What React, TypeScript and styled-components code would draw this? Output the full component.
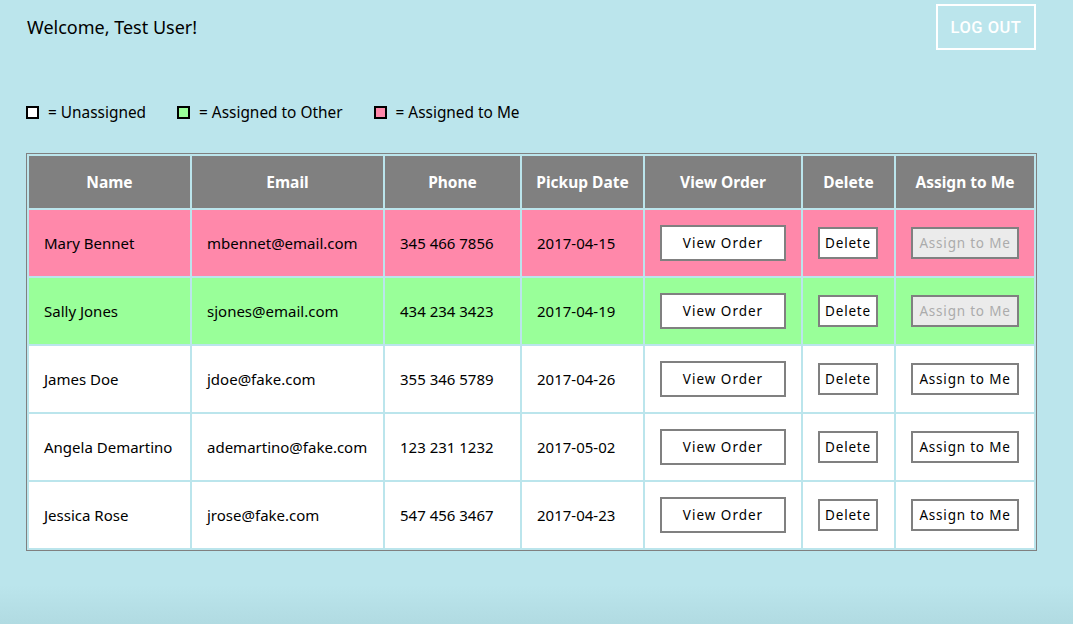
import React from "react";
import styled, { createGlobalStyle } from "styled-components";

const Global = createGlobalStyle`
  html, body {
    margin: 0;
    padding: 0;
  }
  body {
    min-height: 624px;
    background: linear-gradient(to bottom, #bbe5ec 0px, #bbe5ec 585px, #b1dbe2 624px);
    font-family: "Noto Sans", Lato, sans-serif;
    color: #000;
  }
`;

const Page = styled.div`
  padding: 4px 37px 0 26px;
`;

const Header = styled.header`
  display: flex;
  justify-content: space-between;
  align-items: center;
`;

const Welcome = styled.h1`
  margin: 0;
  padding-left: 1px;
  font-size: 18px;
  font-weight: 400;
`;

const LogOut = styled.button`
  width: 100px;
  height: 46px;
  background: transparent;
  border: 2px solid #fff;
  color: #fff;
  font-family: Roboto, "Liberation Sans", sans-serif;
  font-size: 16.5px;
  font-weight: 500;
  letter-spacing: 0.5px;
  padding: 0;
`;

const Legend = styled.div`
  display: flex;
  align-items: center;
  gap: 31px;
  margin-top: 52px;
  height: 20px;
`;

const LegendItem = styled.div`
  display: flex;
  align-items: center;
  gap: 9px;
  font-size: 15.4px;
`;

const Swatch = styled.span<{ $color: string }>`
  width: 13px;
  height: 13px;
  box-sizing: border-box;
  border: 2px solid #000;
  background: ${(p) => p.$color};
`;

const Table = styled.table`
  margin-top: 31px;
  width: 1011px;
  table-layout: fixed;
  border-collapse: separate;
  border-spacing: 2px;
  border: 1px solid #808080;
  font-size: 15px;
`;

const Th = styled.th`
  background: #808080;
  color: #fff;
  font-weight: 700;
  font-size: 15.5px;
  height: 52px;
  padding: 0;
  text-align: center;
`;

const Tr = styled.tr<{ $bg: string }>`
  background: ${(p) => p.$bg};
`;

const Td = styled.td`
  height: 66px;
  padding: 0 0 0 15px;
  vertical-align: middle;
  white-space: nowrap;
`;

const ViewButton = styled.button`
  display: block;
  box-sizing: border-box;
  width: 126px;
  height: 36px;
  background: #fff;
  border: 2px solid #808080;
  font-family: "Noto Sans", Lato, sans-serif;
  font-size: 13.5px;
  letter-spacing: 1px;
  color: #000;
  padding: 0;
`;

const SmallButton = styled.button<{ $w: number }>`
  display: block;
  box-sizing: border-box;
  width: ${(p) => p.$w}px;
  height: 32px;
  background: #fff;
  border: 2px solid #808080;
  font-family: "Noto Sans", Lato, sans-serif;
  font-size: 13.5px;
  letter-spacing: 0.8px;
  color: #000;
  padding: 0;
  &:disabled {
    background: #ebebeb;
    color: #ababab;
  }
`;

type Row = {
  name: string;
  email: string;
  phone: string;
  date: string;
  status: "me" | "other" | "none";
};

const rows: Row[] = [
  { name: "Mary Bennet", email: "mbennet@email.com", phone: "345 466 7856", date: "2017-04-15", status: "me" },
  { name: "Sally Jones", email: "sjones@email.com", phone: "434 234 3423", date: "2017-04-19", status: "other" },
  { name: "James Doe", email: "jdoe@fake.com", phone: "355 346 5789", date: "2017-04-26", status: "none" },
  { name: "Angela Demartino", email: "ademartino@fake.com", phone: "123 231 1232", date: "2017-05-02", status: "none" },
  { name: "Jessica Rose", email: "jrose@fake.com", phone: "547 456 3467", date: "2017-04-23", status: "none" },
];

const colors = { me: "#ff88aa", other: "#99ff99", none: "#ffffff" };
const widths = [161, 191, 135, 121, 156, 91, 138];
const heads = ["Name", "Email", "Phone", "Pickup Date", "View Order", "Delete", "Assign to Me"];

export default function App() {
  return (
    <>
      <Global />
      <Page>
        <Header>
          <Welcome>Welcome, Test User!</Welcome>
          <LogOut>LOG OUT</LogOut>
        </Header>
        <Legend>
          <LegendItem>
            <Swatch $color="#ffffff" />= Unassigned
          </LegendItem>
          <LegendItem>
            <Swatch $color="#99ff99" />= Assigned to Other
          </LegendItem>
          <LegendItem>
            <Swatch $color="#ff88aa" />= Assigned to Me
          </LegendItem>
        </Legend>
        <Table>
          <colgroup>
            {widths.map((w, i) => (
              <col key={i} style={{ width: w }} />
            ))}
          </colgroup>
          <thead>
            <tr>
              {heads.map((h) => (
                <Th key={h}>{h}</Th>
              ))}
            </tr>
          </thead>
          <tbody>
            {rows.map((r) => (
              <Tr key={r.name} $bg={colors[r.status]}>
                <Td>{r.name}</Td>
                <Td>{r.email}</Td>
                <Td>{r.phone}</Td>
                <Td>{r.date}</Td>
                <Td>
                  <ViewButton>View Order</ViewButton>
                </Td>
                <Td>
                  <SmallButton $w={60}>Delete</SmallButton>
                </Td>
                <Td>
                  <SmallButton $w={108} disabled={r.status !== "none"}>
                    Assign to Me
                  </SmallButton>
                </Td>
              </Tr>
            ))}
          </tbody>
        </Table>
      </Page>
    </>
  );
}
